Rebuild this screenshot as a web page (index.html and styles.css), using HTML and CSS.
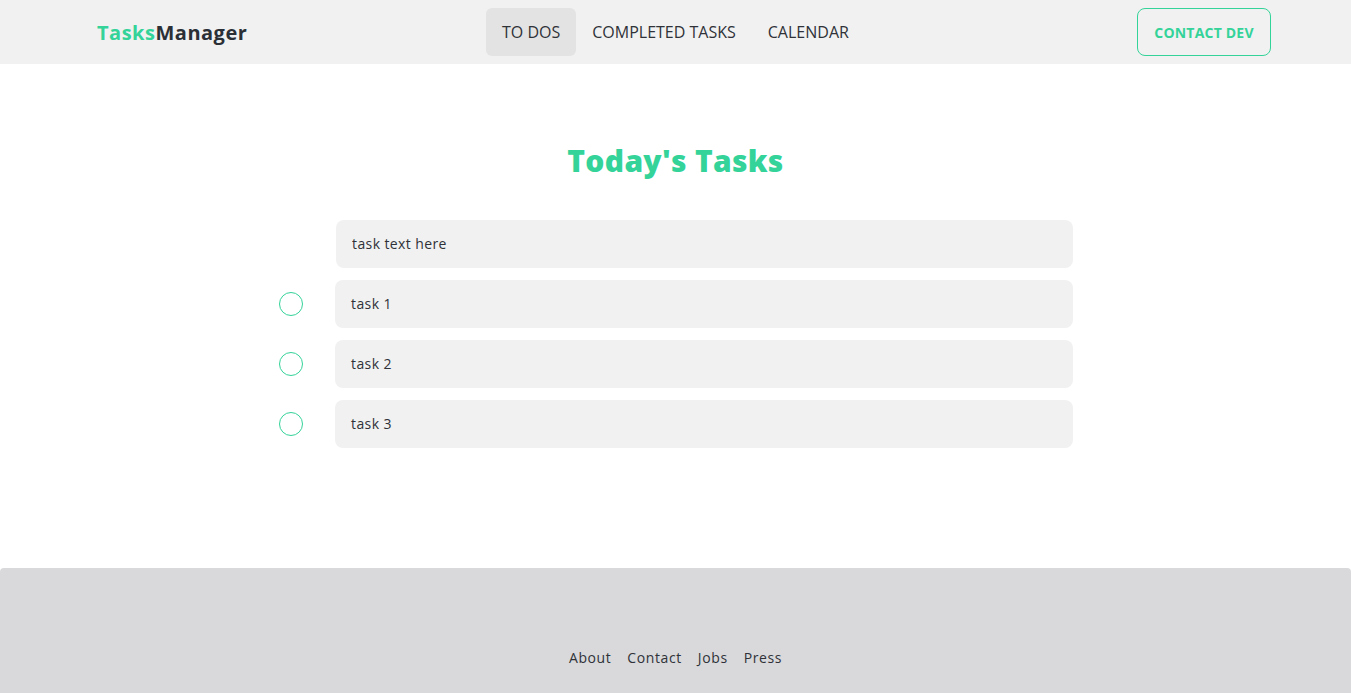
FILE: index.html
```html
<!DOCTYPE html>
<html lang="en">
<head>
<meta charset="utf-8">
<title>TasksManager</title>
<link rel="stylesheet" href="styles.css">
</head>
<body>
<header class="topbar">
  <div class="logo"><span class="logo-accent">Tasks</span>Manager</div>
  <nav class="nav">
    <a class="nav-link active" href="#">TO DOS</a>
    <a class="nav-link" href="#">COMPLETED TASKS</a>
    <a class="nav-link" href="#">CALENDAR</a>
  </nav>
  <a class="contact-btn" href="#">CONTACT DEV</a>
</header>
<main class="main">
  <h1 class="title">Today's Tasks</h1>
  <div class="tasks">
    <div class="new-task">
      <input class="task-input" type="text" value="task text here">
    </div>
    <div class="task-row">
      <span class="check"></span>
      <div class="task-box">task 1</div>
    </div>
    <div class="task-row">
      <span class="check"></span>
      <div class="task-box">task 2</div>
    </div>
    <div class="task-row">
      <span class="check"></span>
      <div class="task-box">task 3</div>
    </div>
  </div>
</main>
<footer class="footer">
  <nav class="footer-links">
    <a href="#">About</a>
    <a href="#">Contact</a>
    <a href="#">Jobs</a>
    <a href="#">Press</a>
  </nav>
</footer>
</body>
</html>
```
FILE: styles.css
```css
* { box-sizing: border-box; }
html, body { margin: 0; padding: 0; }
body {
  font-family: "Open Sans", "Noto Sans", sans-serif;
  color: #2f3238;
  background: #fff;
  height: 693px;
  overflow: hidden;
}
a { text-decoration: none; color: inherit; }

.topbar {
  height: 64px;
  background: #f1f1f1;
  display: flex;
  align-items: center;
  padding: 0 80px 0 97px;
}
.logo {
  flex: 0 0 389px;
  font-size: 20px;
  font-weight: 700;
  color: #2b2f36;
  letter-spacing: 0.5px;
}
.logo-accent { color: #34d399; }
.nav { display: flex; }
.nav-link {
  height: 48px;
  display: flex;
  align-items: center;
  padding: 0 16px;
  font-size: 16px;
  color: #2f3238;
  border-radius: 6px;
}
.nav-link.active { background: #e3e3e3; }
.contact-btn {
  margin-left: auto;
  height: 48px;
  width: 134px;
  display: flex;
  align-items: center;
  justify-content: center;
  border: 1px solid #34d399;
  border-radius: 8px;
  color: #34d399;
  font-size: 14px;
  font-weight: 700;
  letter-spacing: 0.2px;
}

.main {
  height: 504px;
  padding-top: 74px;
  display: flex;
  flex-direction: column;
  align-items: center;
}
.title {
  margin: 0;
  font-size: 30px;
  line-height: 46px;
  font-weight: 800;
  color: #34d399;
  letter-spacing: 0.3px;
}
.tasks {
  margin-top: 36px;
  width: 794px;
  margin-left: 1px;
  display: flex;
  flex-direction: column;
  gap: 12px;
}
.new-task { padding-left: 57px; }
.task-input {
  width: 100%;
  height: 48px;
  border: none;
  outline: none;
  background: #f1f1f1;
  border-radius: 8px;
  padding: 0 16px 2px;
  font-family: inherit;
  font-size: 14px;
  letter-spacing: 0.4px;
  color: #2f3238;
}
.task-row {
  display: flex;
  align-items: center;
  gap: 32px;
}
.check {
  flex: 0 0 24px;
  width: 24px;
  height: 24px;
  border: 1px solid #34d399;
  border-radius: 50%;
}
.task-box {
  flex: 1;
  height: 48px;
  display: flex;
  align-items: center;
  padding: 0 16px 2px;
  background: #f1f1f1;
  border-radius: 8px;
  font-size: 14px;
  letter-spacing: 0.4px;
}

.footer {
  height: 125px;
  background: #d9d9db;
  border-radius: 4px 4px 0 0;
  display: flex;
  justify-content: center;
  padding-top: 79px;
}
.footer-links {
  display: flex;
  gap: 16px;
  font-size: 14px;
  line-height: 22px;
  height: 22px;
  color: #2f3238;
  letter-spacing: 0.6px;
}
```
